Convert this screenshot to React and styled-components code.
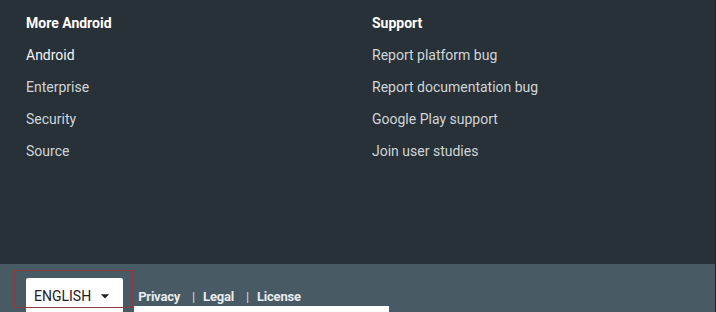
import styled, { createGlobalStyle } from "styled-components";

const GlobalStyle = createGlobalStyle`
	html, body {
		margin: 0;
		padding: 0;
		background: #263238;
	}
	body {
		font-family: Roboto, "Liberation Sans", Arial, sans-serif;
		-webkit-font-smoothing: antialiased;
	}
`;

const Page = styled.div`
	width: 716px;
	height: 312px;
	overflow: hidden;
	box-sizing: border-box;
	border-right: 1px solid #1d2327;
`;

const Links = styled.div`
	display: grid;
	grid-template-columns: 346px 1fr;
	height: 264px;
	box-sizing: border-box;
	padding: 7px 0 0 26px;
	background: #283138;
`;

const Column = styled.ul`
	list-style: none;
	margin: 0;
	padding: 0;
`;

const Item = styled.li`
	font-size: 14px;
	line-height: 32px;
	height: 32px;
	color: ${(p) => (p.$heading ? "#ffffff" : p.$bright ? "#f3f5f6" : "#cfd5d8")};
	font-weight: ${(p) => (p.$heading ? 700 : 400)};
	white-space: nowrap;
`;

const Footer = styled.div`
	position: relative;
	display: flex;
	align-items: flex-start;
	height: 48px;
	padding: 14px 0 0 26px;
	box-sizing: border-box;
	background: #485a64;
`;

// red annotation box drawn over the language button
const Highlight = styled.div`
	position: absolute;
	left: 14px;
	top: 6px;
	width: 119px;
	height: 38px;
	box-sizing: border-box;
	border: 1px solid #8c3a40;
	pointer-events: none;
	z-index: 2;
`;

const LangButton = styled.button`
	display: flex;
	align-items: center;
	gap: 4px;
	height: 36px;
	padding: 0 8px;
	border: none;
	border-radius: 2px 2px 0 0;
	background: #ffffff;
	color: #202124;
	font-family: inherit;
	font-size: 14px;
	cursor: pointer;
`;

const Legal = styled.div`
	display: flex;
	flex-direction: column;
	margin-left: 11px;
	padding-top: 8px;
`;

const LegalRow = styled.div`
	display: flex;
	align-items: center;
	height: 20px;
	padding-left: 4px;
	font-size: 13px;
	font-weight: 700;
	letter-spacing: -0.2px;
	color: #e6ecef;
`;

const Sep = styled.span`
	font-weight: 400;
	margin: 0 8px 0 12px;
	color: #d5dde1;
`;

const Strip = styled.div`
	width: 255px;
	height: 10px;
	background: #ffffff;
`;

const moreAndroid = ["Android", "Enterprise", "Security", "Source"];
const support = [
	"Report platform bug",
	"Report documentation bug",
	"Google Play support",
	"Join user studies",
];

const App = () => {
	return (
		<Page>
			<GlobalStyle />
			<Links>
				<Column>
					<Item $heading>More Android</Item>
					{moreAndroid.map((label, i) => (
						<Item key={label} $bright={i === 0}>
							{label}
						</Item>
					))}
				</Column>
				<Column>
					<Item $heading>Support</Item>
					{support.map((label) => (
						<Item key={label}>{label}</Item>
					))}
				</Column>
			</Links>
			<Footer>
				<LangButton>
					ENGLISH
					<svg width="20" height="20" viewBox="0 0 24 24">
						<path d="M7 10l5 5 5-5z" fill="#202124" />
					</svg>
				</LangButton>
				<Legal>
					<LegalRow>
						Privacy
						<Sep>|</Sep>
						Legal
						<Sep>|</Sep>
						License
					</LegalRow>
					<Strip />
				</Legal>
				<Highlight />
			</Footer>
		</Page>
	);
};

export default App;
